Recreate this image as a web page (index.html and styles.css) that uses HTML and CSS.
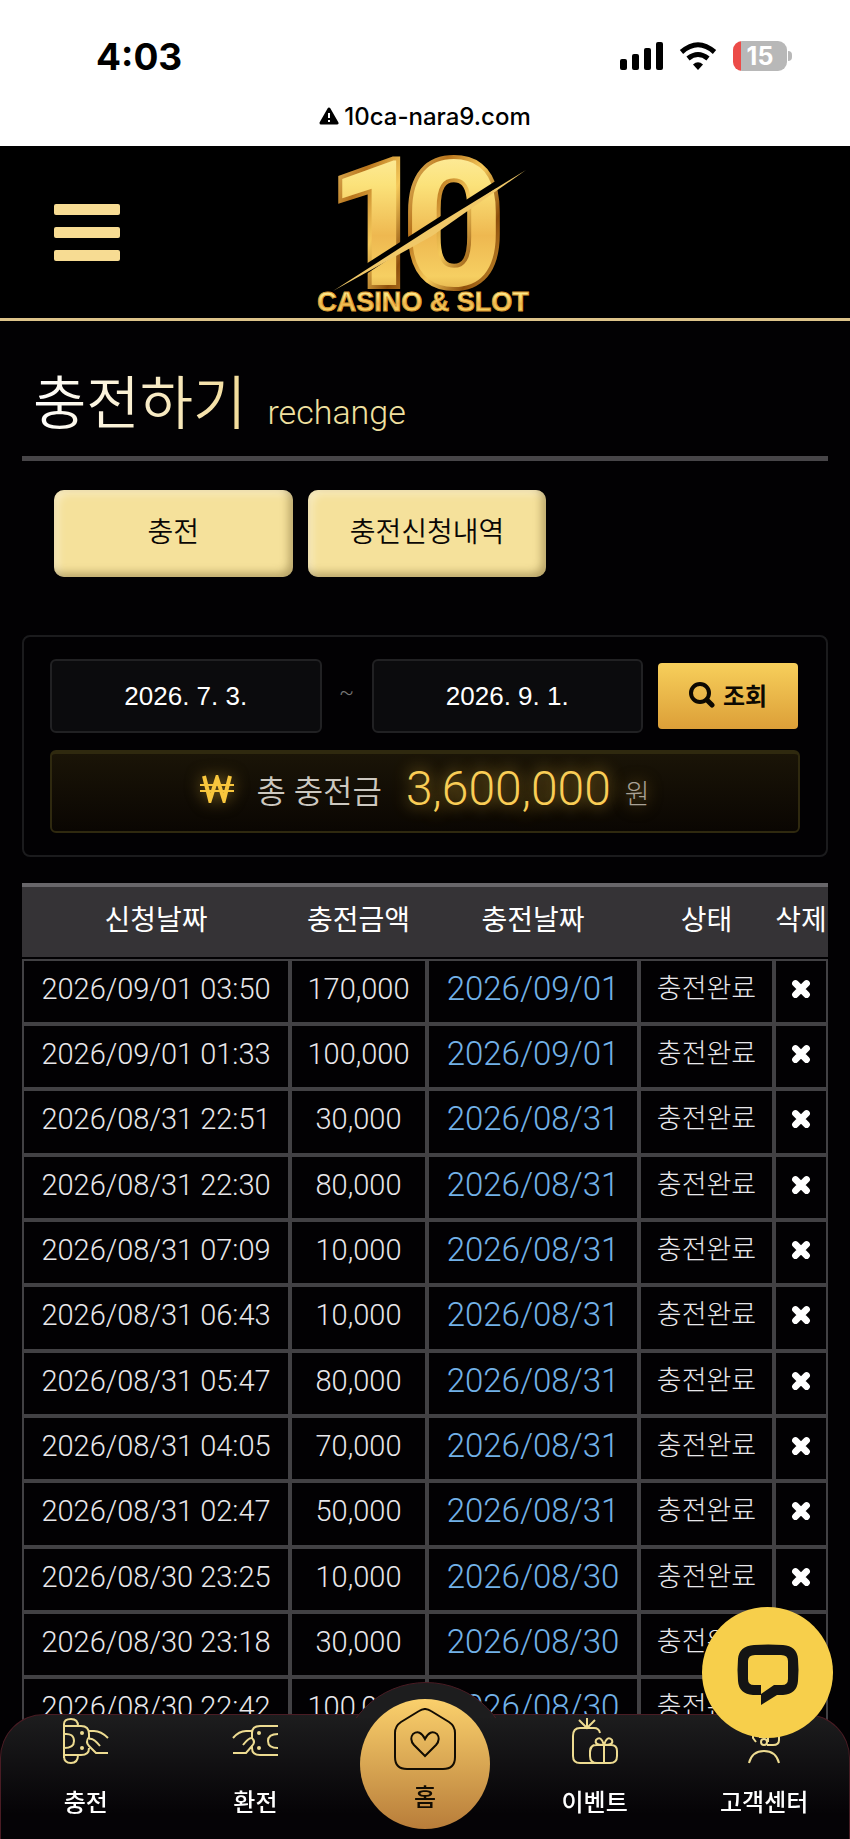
FILE: index.html
```html
<!DOCTYPE html>
<html lang="ko">
<head>
    <meta charset="UTF-8">
    <meta name="viewport" content="width=device-width, initial-scale=1.0">
    <title>충전하기</title>
    <link rel="stylesheet" href="styles.css">
</head>
<body>
    <svg class="defs" width="0" height="0" aria-hidden="true">
        <symbol id="x" viewBox="0 0 18 18">
            <path d="M4 4L14 14M14 4L4 14" stroke="#fff" stroke-width="6" stroke-linecap="round"/>
        </symbol>
    </svg>

    <div class="status-bar">
        <div class="status-row">
            <span class="clock">4:03</span>
            <div class="status-icons">
                <svg width="43" height="28" viewBox="0 0 43 28">
                    <rect x="0" y="17" width="7" height="11" rx="2"/>
                    <rect x="12" y="12" width="7" height="16" rx="2"/>
                    <rect x="24" y="6" width="7" height="22" rx="2"/>
                    <rect x="36" y="0" width="7" height="28" rx="2"/>
                </svg>
                <svg width="38" height="28" viewBox="0 0 38 28">
                    <path d="M19 28L14 22.500Q19 18 24 22.500Z"/>
                    <path d="M9 16.500Q19 8.500 29 16.500" fill="none" stroke="#000" stroke-width="5"/>
                    <path d="M2.500 10Q19 -4.500 35.500 10" fill="none" stroke="#000" stroke-width="5"/>
                </svg>
                <div class="battery"><span>15</span></div>
            </div>
        </div>
        <div class="url">
            <svg width="20" height="18" viewBox="0 0 20 18">
                <path d="M10 2L18 16H2Z" stroke="#000" stroke-width="3" stroke-linejoin="round"/>
                <path d="M10 6V11M10 13V15" stroke="#fff" stroke-width="2"/>
            </svg>
            <span>10ca-nara9.com</span>
        </div>
    </div>

    <header class="header">
        <button type="button" class="menu-btn" aria-label="메뉴"><i></i><i></i><i></i></button>
        <a href="#" class="logo" aria-label="10 Casino &amp; Slot">
            <svg width="230" height="168" viewBox="0 0 230 168">
                <defs>
                    <linearGradient id="gold" x1="0" y1="0" x2="0" y2="1">
                        <stop offset="0" stop-color="#fff3b8"/>
                        <stop offset=".3" stop-color="#fbe27a"/>
                        <stop offset=".55" stop-color="#eeb850"/>
                        <stop offset=".75" stop-color="#f6cf62"/>
                        <stop offset="1" stop-color="#b87418"/>
                    </linearGradient>
                    <linearGradient id="edge" x1="0" y1="0" x2="1" y2="1">
                        <stop offset="0" stop-color="#ffe88c"/>
                        <stop offset=".3" stop-color="#b8741c"/>
                        <stop offset=".5" stop-color="#f5c95a"/>
                        <stop offset=".7" stop-color="#8e4f0c"/>
                        <stop offset="1" stop-color="#f2be4b"/>
                    </linearGradient>
                </defs>
                <g class="logo-num" fill="url(#gold)" stroke="url(#edge)" stroke-width="8">
                    <text x="18" y="137">1</text>
                    <text x="94" y="137">0</text>
                </g>
                <path d="M20 139L209 18L211 24L26 146Z" fill="#000"/>
                <path d="M23 143L118 82L216 22L122 88Z" fill="#f0c868"/>
                <text class="logo-sub" x="113" y="163" text-anchor="middle" fill="url(#gold)" stroke="#d99a31">CASINO &amp; SLOT</text>
            </svg>
        </a>
    </header>

    <main class="content">
        <h1 class="page-title"><span class="title-ko">충전하기</span><small>rechange</small></h1>

        <div class="tabs">
            <button type="button">충전</button>
            <button type="button">충전신청내역</button>
        </div>

        <section class="search-box">
            <form class="search-row">
                <input type="text" name="startDate" value="2026. 7. 3." aria-label="시작일">
                <span class="tilde">~</span>
                <input type="text" name="endDate" value="2026. 9. 1." aria-label="종료일">
                <button type="button" class="search-btn">
                    <svg width="26" height="26" viewBox="0 0 26 26" fill="none" stroke="#0d0902" stroke-linecap="round">
                        <circle cx="11" cy="11" r="9" stroke-width="4"/>
                        <path d="M18 18L23 23" stroke-width="5"/>
                    </svg>
                    조회
                </button>
            </form>
            <div class="total">
                <svg class="won" width="34" height="28" viewBox="0 0 34 28" fill="none" stroke="#f8c63d">
                    <path d="M4 1L10 25L17 3L24 25L30 1" stroke-width="4"/>
                    <path d="M0 10H34M0 16H34" stroke-width="2"/>
                </svg>
                <span class="total-label">총 충전금</span>
                <strong>3,600,000</strong>
                <span class="unit">원</span>
            </div>
        </section>

        <table class="list">
            <colgroup>
                <col class="c-date"><col class="c-amount"><col class="c-done"><col class="c-state"><col class="c-del">
            </colgroup>
            <thead>
                <tr><th>신청날짜</th><th>충전금액</th><th>충전날짜</th><th>상태</th><th>삭제</th></tr>
            </thead>
            <tbody>
                <tr><td>2026/09/01 03:50</td><td>170,000</td><td class="done">2026/09/01</td><td class="state">충전완료</td><td><button type="button" aria-label="삭제"><svg><use href="#x"/></svg></button></td></tr>
                <tr><td>2026/09/01 01:33</td><td>100,000</td><td class="done">2026/09/01</td><td class="state">충전완료</td><td><button type="button" aria-label="삭제"><svg><use href="#x"/></svg></button></td></tr>
                <tr><td>2026/08/31 22:51</td><td>30,000</td><td class="done">2026/08/31</td><td class="state">충전완료</td><td><button type="button" aria-label="삭제"><svg><use href="#x"/></svg></button></td></tr>
                <tr><td>2026/08/31 22:30</td><td>80,000</td><td class="done">2026/08/31</td><td class="state">충전완료</td><td><button type="button" aria-label="삭제"><svg><use href="#x"/></svg></button></td></tr>
                <tr><td>2026/08/31 07:09</td><td>10,000</td><td class="done">2026/08/31</td><td class="state">충전완료</td><td><button type="button" aria-label="삭제"><svg><use href="#x"/></svg></button></td></tr>
                <tr><td>2026/08/31 06:43</td><td>10,000</td><td class="done">2026/08/31</td><td class="state">충전완료</td><td><button type="button" aria-label="삭제"><svg><use href="#x"/></svg></button></td></tr>
                <tr><td>2026/08/31 05:47</td><td>80,000</td><td class="done">2026/08/31</td><td class="state">충전완료</td><td><button type="button" aria-label="삭제"><svg><use href="#x"/></svg></button></td></tr>
                <tr><td>2026/08/31 04:05</td><td>70,000</td><td class="done">2026/08/31</td><td class="state">충전완료</td><td><button type="button" aria-label="삭제"><svg><use href="#x"/></svg></button></td></tr>
                <tr><td>2026/08/31 02:47</td><td>50,000</td><td class="done">2026/08/31</td><td class="state">충전완료</td><td><button type="button" aria-label="삭제"><svg><use href="#x"/></svg></button></td></tr>
                <tr><td>2026/08/30 23:25</td><td>10,000</td><td class="done">2026/08/30</td><td class="state">충전완료</td><td><button type="button" aria-label="삭제"><svg><use href="#x"/></svg></button></td></tr>
                <tr><td>2026/08/30 23:18</td><td>30,000</td><td class="done">2026/08/30</td><td class="state">충전완료</td><td><button type="button" aria-label="삭제"><svg><use href="#x"/></svg></button></td></tr>
                <tr><td>2026/08/30 22:42</td><td>100,000</td><td class="done">2026/08/30</td><td class="state">충전완료</td><td><button type="button" aria-label="삭제"><svg><use href="#x"/></svg></button></td></tr>
            </tbody>
        </table>
    </main>

    <nav class="bottom-nav">
        <a href="#">
            <svg class="nav-icon" viewBox="0 0 46 46">
                <path d="M1 40V6Q1 1 8 1Q15 1 15 8H1M1 38Q1 45 8 45Q15 45 15 37H1M1 8H18Q26 8 26 16V20M1 37H18Q26 37 26 30M1 16Q11 15 11 23Q11 30 1 30M26 13H31Q38 13 45 20M26 21Q30 19 37 28M26 19Q22 24 26 28L33 35H45"/>
                <circle class="dot" cx="19" cy="15" r="2"/><circle class="dot" cx="19" cy="30" r="2"/>
            </svg>
            <span>충전</span>
        </a>
        <a href="#">
            <svg class="nav-icon" viewBox="0 0 46 46">
                <path d="M46 8H28Q20 8 20 15V20Q24 24 20 28V30Q20 37 28 37H46M46 16Q36 16 36 23Q36 30 46 30M20 13H14Q7 13 1 20M20 20Q17 19 11 27M20 28L14 35H1"/>
                <circle class="dot" cx="27" cy="15" r="2"/><circle class="dot" cx="27" cy="30" r="2"/>
            </svg>
            <span>환전</span>
        </a>
        <a href="#" class="home">
            <span class="home-circle">
                <svg width="62" height="62" viewBox="0 0 62 62" fill="none" stroke="#120c02" stroke-width="2">
                    <path d="M25 3Q31 -1 37 3L55 14Q61 18 61 25V49Q61 61 49 61H13Q1 61 1 49V25Q1 18 7 14Z"/>
                    <path d="M31 48L20 37Q15 31 19 26Q26 21 31 31Q36 21 43 26Q47 31 42 37Z"/>
                </svg>
                <span>홈</span>
            </span>
        </a>
        <a href="#">
            <svg class="nav-icon" viewBox="0 0 46 46">
                <path d="M15 0V10M7 2L15 10L23 2M18 45H8Q1 45 1 38V18Q1 10 8 10H22Q27 10 28 15M25 27H39Q45 27 45 33V38Q45 45 38 45H25Q18 45 18 38V33Q18 27 25 27ZM18 34Q19 28 22 27M32 27V45M32 27Q22 27 24 22Q29 17 32 27Q35 17 40 22Q42 27 32 27M13 45H30"/>
            </svg>
            <span>이벤트</span>
        </a>
        <a href="#">
            <svg class="nav-icon" viewBox="0 0 46 46">
                <path d="M8 45Q11 33 23 33Q35 33 38 45M10 15Q10 3 23 3Q36 3 36 15M12 16V20L15 24M38 15V22Q38 27 32 27H26M18 19H27V24"/>
                <circle cx="23" cy="24" r="3"/>
            </svg>
            <span>고객센터</span>
        </a>
    </nav>

    <button type="button" class="chat-btn" aria-label="채팅 상담">
        <svg width="62" height="62" viewBox="0 0 62 62">
            <path fill-rule="evenodd" fill="#141414" d="M17 1Q31 0 46 1Q60 2 61 15Q62 26 61 37Q60 50 46 51H40L24 61V51H16Q2 50 1 37Q0 26 1 15Q2 2 17 1ZM18 11Q11 11 11 17V35Q11 41 17 41H24V50L37 41H45Q51 41 51 35V17Q51 11 44 11Z"/>
        </svg>
    </button>
</body>
</html>
```
FILE: styles.css
```css
* {
    box-sizing: border-box;
}
body {
    margin: 0;
    background: #020103;
    color: #fff;
    font-family: Roboto, 'Noto Sans CJK KR', sans-serif;
}
button {
    font-family: inherit;
    cursor: pointer;
}
.defs {
    position: absolute;
}

/* status bar */
.status-bar {
    height: 146px;
    padding: 32px 56px 0 96px;
    background: #fff;
    color: #000;
    font-family: Inter, sans-serif;
}
.status-row {
    display: flex;
    justify-content: space-between;
    align-items: center;
    height: 48px;
}
.clock {
    font-size: 37px;
    font-weight: 700;
}
.status-icons {
    display: flex;
    align-items: center;
    gap: 16px;
}
.battery {
    position: relative;
    width: 54px;
    height: 30px;
    margin-right: 7px;
    border-radius: 9px;
    background: linear-gradient(90deg, #ec4b48 8px, #b8b8b8 8px);
    color: #fff;
    font-size: 25px;
    font-weight: 700;
    line-height: 30px;
    text-align: center;
}
.battery::after {
    content: "";
    position: absolute;
    right: -5px;
    top: 10px;
    width: 4px;
    height: 10px;
    border-radius: 0 4px 4px 0;
    background: #b8b8b8;
}
.url {
    display: flex;
    justify-content: center;
    align-items: center;
    gap: 5px;
    height: 32px;
    margin: 20px 40px 0 0;
    font-size: 24px;
    font-weight: 500;
}

/* header */
.header {
    display: grid;
    grid-template-columns: 1fr auto 1fr;
    align-items: center;
    height: 175px;
    padding: 0 54px;
    background: #000;
    border-bottom: 3px solid #dcc38a;
}
.menu-btn {
    display: flex;
    flex-direction: column;
    gap: 12px;
    width: 66px;
    padding: 0;
    border: 0;
    background: none;
}
.menu-btn i {
    height: 11px;
    border-radius: 2px;
    background: #f7dc93;
}
.logo svg {
    display: block;
    overflow: visible;
}
.logo-num {
    font-family: Roboto, sans-serif;
    font-size: 174px;
    font-weight: 700;
    paint-order: stroke;
}
.logo-sub {
    font-family: 'Liberation Sans', sans-serif;
    font-size: 27px;
    font-weight: 700;
}

/* content */
.content {
    padding: 34px 22px 90px;
}
.page-title {
    display: flex;
    align-items: baseline;
    gap: 21px;
    height: 106px;
    margin: 0;
    padding-left: 11px;
    border-bottom: 5px solid #474548;
    font-weight: 300;
    line-height: 98px;
}
.title-ko {
    font-size: 58px;
    font-weight: 350;
    background: linear-gradient(90deg, #fff, #f3dc99);
    -webkit-background-clip: text;
    background-clip: text;
    color: transparent;
}
.page-title small {
    font-size: 34px;
    color: #f0e0a0;
}
.tabs {
    display: flex;
    gap: 15px;
    padding: 29px 28px 58px 32px;
}
.tabs button {
    width: 32%;
    height: 87px;
    padding: 0 0 8px;
    border: 0;
    border-radius: 10px;
    background: #f5e19b;
    box-shadow: inset -4px -4px 8px rgba(90, 70, 20, 0.4), inset 4px 4px 8px rgba(255, 255, 255, 0.4);
    color: #0a0705;
    font-size: 28px;
    font-weight: 350;
}

/* search */
.search-box {
    padding: 22px 26px;
    border: 2px solid #1b1b1d;
    border-radius: 8px;
}
.search-row {
    display: flex;
    align-items: center;
    gap: 15px;
    padding-right: 2px;
}
.search-row input {
    flex: 1;
    min-width: 0;
    height: 74px;
    border: 2px solid #212123;
    border-radius: 6px;
    background: #0b0b0d;
    color: #fff;
    font-family: 'Liberation Sans', sans-serif;
    font-size: 26px;
    text-align: center;
}
.tilde {
    width: 20px;
    padding-bottom: 8px;
    color: #777;
    font-size: 22px;
    font-weight: 300;
    text-align: center;
}
.search-btn {
    display: flex;
    align-items: center;
    justify-content: center;
    gap: 8px;
    width: 140px;
    height: 66px;
    padding: 0 0 3px;
    border: 0;
    border-radius: 4px;
    background: linear-gradient(#f7cf5b, #dc9f38);
    color: #0d0902;
    font-size: 24px;
    font-weight: 700;
}
.total {
    display: flex;
    align-items: center;
    justify-content: center;
    height: 83px;
    margin-top: 17px;
    padding-bottom: 8px;
    border: 2px solid #2f290f;
    border-top-width: 4px;
    border-radius: 6px;
    background: linear-gradient(#1a1407, #0a0602);
    color: #ccc8c0;
    font-weight: 350;
}
.won {
    filter: drop-shadow(0 0 8px rgba(248, 198, 61, 0.5));
}
.total-label {
    margin: 0 24px 0 22px;
    font-size: 32px;
}
.total strong {
    color: #f9cd56;
    font-size: 48px;
    font-weight: 300;
    line-height: 60px;
    text-shadow: 0 0 16px rgba(248, 198, 61, 0.8);
}
.unit {
    margin: 8px 0 0 14px;
    color: #a8a195;
    font-size: 27px;
    font-weight: 300;
    text-shadow: 0 0 16px rgba(248, 198, 61, 0.5);
}

/* list */
.list {
    width: 100%;
    margin-top: 26px;
    border-spacing: 0;
    table-layout: fixed;
}
.c-date {
    width: 268px;
}
.c-amount {
    width: 137px;
}
.c-done {
    width: 212px;
}
.c-state {
    width: 135px;
}
.c-del {
    width: 54px;
}
.list th {
    height: 76px;
    padding: 0 0 2px;
    border-top: 4px solid #68666a;
    border-bottom: 2px solid #020103;
    background: #353336;
    background-clip: padding-box;
    font-size: 28px;
    font-weight: 400;
    line-height: 40px;
    white-space: nowrap;
}
.list td {
    height: 65px;
    padding: 0 0 6px;
    border: 2px solid #424144;
    color: #e8e7ea;
    font-size: 29px;
    font-weight: 300;
    line-height: 40px;
    text-align: center;
    white-space: nowrap;
}
.list tr:nth-child(3n) td {
    height: 66px;
}
.list td.done {
    color: #72b1e8;
    font-size: 33px;
}
.list td.state {
    font-size: 27px;
}
.list button {
    display: block;
    margin: 0 auto;
    padding: 0;
    border: 0;
    background: none;
}
.list button svg {
    display: block;
    width: 20px;
    height: 20px;
}

/* bottom nav */
.bottom-nav {
    position: fixed;
    left: 0;
    right: 0;
    bottom: 0;
    display: grid;
    grid-template-columns: repeat(5, 1fr);
    height: 125px;
    border: 1px solid #4a1c24;
    border-bottom: 0;
    border-radius: 44px 44px 0 0;
    background: linear-gradient(#1d1d1e, #050306 80%);
}
.bottom-nav a {
    display: flex;
    flex-direction: column;
    align-items: center;
    gap: 21px;
    padding-top: 3px;
    color: #fff;
    font-size: 24px;
    font-weight: 500;
    line-height: 36px;
    text-decoration: none;
}
.nav-icon {
    width: 46px;
    height: 46px;
    fill: none;
    stroke: #eddb91;
    stroke-width: 2;
}
.nav-icon .dot {
    fill: #eddb91;
    stroke: none;
}
.bottom-nav .home {
    position: relative;
    color: #120c02;
}
/* raised ring behind the home button, cut where it meets the bar */
.home::before {
    content: "";
    position: absolute;
    top: -33px;
    left: 50%;
    width: 172px;
    height: 172px;
    margin-left: -86px;
    border: 1px solid #4a1c24;
    border-radius: 50%;
    background: #1d1d1e;
    clip-path: inset(0 0 138px 0);
}
.home-circle {
    position: absolute;
    top: -16px;
    display: flex;
    flex-direction: column;
    align-items: center;
    gap: 10px;
    width: 130px;
    height: 130px;
    padding-top: 9px;
    border-radius: 50%;
    background: linear-gradient(#fad06c, #b87d3a);
}

.chat-btn {
    position: fixed;
    right: 17px;
    bottom: 101px;
    display: flex;
    align-items: center;
    justify-content: center;
    width: 131px;
    height: 131px;
    padding: 4px 0 0;
    border: 0;
    border-radius: 50%;
    background: #f7cf4b;
}
```
